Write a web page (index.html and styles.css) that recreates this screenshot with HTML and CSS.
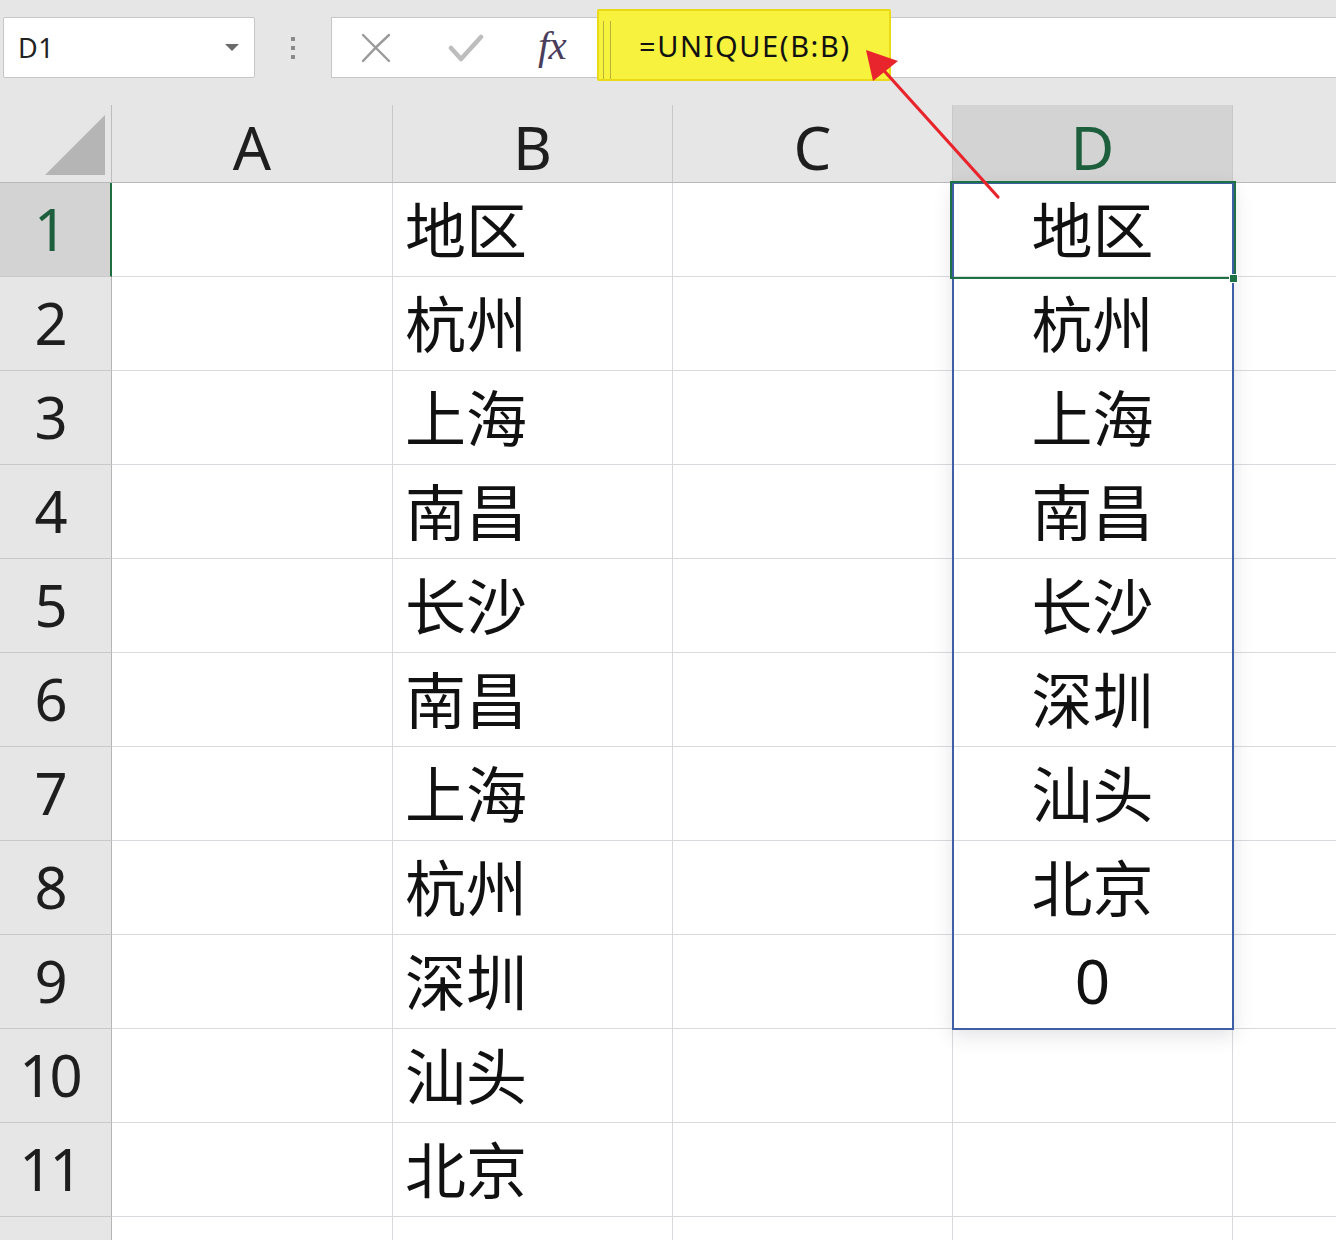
FILE: index.html
```html
<!DOCTYPE html>
<html lang="zh">
<head>
<meta charset="utf-8">
<title>UNIQUE</title>
<link rel="stylesheet" href="styles.css">
</head>
<body>
<div class="app">
  <div class="toolbar">
    <div class="namebox"><span class="ref">D1</span><span class="caret"></span></div>
    <div class="grip"><i></i><i></i><i></i></div>
    <div class="fbar">
      <span class="ic ic-x"><svg width="32" height="32" viewBox="0 0 32 32"><path d="M3 3 L29 29 M29 3 C20 11 12 19 3 29" fill="none" stroke="#9a9a9a" stroke-width="2.4" stroke-linecap="round"/></svg></span>
      <span class="ic ic-ok"><svg width="36" height="30" viewBox="0 0 36 30"><path d="M3 15 L13 26 L33 4" fill="none" stroke="#bdbdbd" stroke-width="4.5" stroke-linecap="round" stroke-linejoin="round"/></svg></span>
      <span class="fx">fx</span>
    </div>
  </div>

  <div class="sheet">
    <div class="corner"><span class="tri"></span></div>
    <div class="ch">A</div>
    <div class="ch">B</div>
    <div class="ch">C</div>
    <div class="ch sel">D</div>
    <div class="ch last"></div>

    <div class="rh sel">1</div><div class="c"></div><div class="c">地区</div><div class="c"></div><div class="c d">地区</div><div class="c last"></div>
    <div class="rh">2</div><div class="c"></div><div class="c">杭州</div><div class="c"></div><div class="c d">杭州</div><div class="c last"></div>
    <div class="rh">3</div><div class="c"></div><div class="c">上海</div><div class="c"></div><div class="c d">上海</div><div class="c last"></div>
    <div class="rh">4</div><div class="c"></div><div class="c">南昌</div><div class="c"></div><div class="c d">南昌</div><div class="c last"></div>
    <div class="rh">5</div><div class="c"></div><div class="c">长沙</div><div class="c"></div><div class="c d">长沙</div><div class="c last"></div>
    <div class="rh">6</div><div class="c"></div><div class="c">南昌</div><div class="c"></div><div class="c d">深圳</div><div class="c last"></div>
    <div class="rh">7</div><div class="c"></div><div class="c">上海</div><div class="c"></div><div class="c d">汕头</div><div class="c last"></div>
    <div class="rh">8</div><div class="c"></div><div class="c">杭州</div><div class="c"></div><div class="c d">北京</div><div class="c last"></div>
    <div class="rh">9</div><div class="c"></div><div class="c">深圳</div><div class="c"></div><div class="c d num">0</div><div class="c last"></div>
    <div class="rh">10</div><div class="c"></div><div class="c">汕头</div><div class="c"></div><div class="c d"></div><div class="c last"></div>
    <div class="rh">11</div><div class="c"></div><div class="c">北京</div><div class="c"></div><div class="c d"></div><div class="c last"></div>
    <div class="rh"></div><div class="c"></div><div class="c"></div><div class="c"></div><div class="c d"></div><div class="c last"></div>

    <div class="spill"></div>
    <div class="active"></div>
    <div class="handle"></div>
  </div>

  <div class="hl"><span class="bar"></span><span class="formula">=UNIQUE(B:B)</span></div>

  <svg class="arrow" width="1336" height="240" viewBox="0 0 1336 240">
    <line x1="998" y1="197" x2="878" y2="64" stroke="#e8242c" stroke-width="3.2" stroke-linecap="round"/>
    <polygon points="866,50 873,81 898,61" fill="#e8242c"/>
  </svg>
</div>
</body>
</html>
```

FILE: styles.css
```css
* { box-sizing: border-box; }
html, body { margin: 0; padding: 0; }
body {
  background: #e6e6e6;
  font-family: "Noto Sans", "Noto Sans CJK SC", sans-serif;
  color: #1a1a1a;
}
.app {
  position: relative;
  width: 1336px;
  height: 1240px;
  overflow: hidden;
  background: #e6e6e6;
}

/* ---------- toolbar ---------- */
.toolbar {
  height: 105px;
  padding-top: 17px;
  display: flex;
  align-items: flex-start;
}
.namebox {
  margin-left: 3px;
  width: 252px;
  height: 61px;
  background: #fff;
  border: 1px solid #c6c6c6;
  border-radius: 2px;
  display: flex;
  align-items: center;
  justify-content: space-between;
  padding: 0 15px 0 14px;
}
.ref {
  font-family: "Noto Sans", sans-serif;
  font-size: 27px;
  color: #222;
  letter-spacing: 0.5px;
}
.caret {
  width: 0;
  height: 0;
  border-left: 7px solid transparent;
  border-right: 7px solid transparent;
  border-top: 7px solid #6a6a6a;
}
.grip {
  width: 76px;
  height: 61px;
  display: flex;
  flex-direction: column;
  align-items: center;
  justify-content: center;
  gap: 5px;
}
.grip i {
  display: block;
  width: 4px;
  height: 4px;
  background: #8a8a8a;
}
.fbar {
  flex: 1;
  margin-right: -10px;
  height: 61px;
  background: #fff;
  border: 1px solid #c6c6c6;
  display: flex;
  align-items: center;
  padding-left: 28px;
}
.ic { display: flex; align-items: center; justify-content: center; }
.ic-x { width: 32px; height: 32px; }
.ic-ok { width: 36px; height: 30px; margin-left: 56px; }
.fx {
  margin-left: 54px;
  font-family: "Liberation Serif", "DejaVu Serif", serif;
  font-style: italic;
  font-size: 41px;
  color: #4a3d5c;
  letter-spacing: -1px;
  margin-top: -6px;
}

/* ---------- highlight of formula ---------- */
.hl {
  position: absolute;
  left: 597px;
  top: 9px;
  width: 294px;
  height: 72px;
  background: #f6f23e;
  border: 2px solid #e9d917;
  border-radius: 2px;
  display: flex;
  align-items: center;
}
.hl .bar {
  margin-left: 4px;
  width: 8px;
  height: 58px;
  border-left: 1px solid #b8b23a;
  border-right: 1px solid #b8b23a;
  align-self: flex-end;
}
.hl .formula {
  margin-left: 28px;
  font-family: "Noto Sans", sans-serif;
  font-size: 29px;
  color: #111;
  letter-spacing: 1.6px;
}
.arrow {
  position: absolute;
  left: 0;
  top: 0;
  pointer-events: none;
}

/* ---------- sheet ---------- */
.sheet {
  position: relative;
  height: 1135px;
  overflow: hidden;
  display: grid;
  grid-template-columns: 112px 281px 280px 280px 280px 103px;
  grid-template-rows: 78px;
  grid-auto-rows: 94px;
}
.corner {
  position: relative;
  border-right: 1px solid #bdbdbd;
  border-bottom: 1px solid #b9b9b9;
}
.tri {
  position: absolute;
  left: 45px;
  top: 10px;
  width: 60px;
  height: 60px;
  background: #b5b5b5;
  clip-path: polygon(0 100%, 100% 0, 100% 100%);
}
.ch {
  border-right: 1px solid #c8c8c8;
  border-bottom: 1px solid #b9b9b9;
  font-family: "Noto Sans", sans-serif;
  font-size: 60px;
  line-height: 77px;
  padding-top: 4px;
  text-align: center;
  color: #1e1e1e;
}
.ch.sel {
  background: #d3d3d3;
  color: #1d5f3d;
}
.ch.last { border-right: none; }
.rh {
  border-right: 1px solid #b5b5b5;
  border-bottom: 1px solid #c9c9c9;
  font-family: "Noto Sans", sans-serif;
  font-size: 58px;
  line-height: 92px;
  text-align: center;
  letter-spacing: -3px;
  padding-right: 12px;
  color: #1e1e1e;
}
.rh.sel {
  background: #d3d3d3;
  color: #1d5f3d;
  border-right: 2px solid #1e6e42;
}
.c {
  background: #fff;
  border-right: 1px solid #d9d9dd;
  border-bottom: 1px solid #d9d9dd;
  font-family: "Noto Sans CJK SC", "Noto Sans", sans-serif;
  font-size: 61px;
  line-height: 90px;
  padding-left: 12px;
  color: #111;
  white-space: nowrap;
}
.c.d {
  text-align: center;
  padding-left: 0;
}
.c.num {
  font-family: "Noto Sans", sans-serif;
  font-size: 62px;
}
.c.last { border-right: none; }

.spill {
  position: absolute;
  left: 952px;
  top: 77px;
  width: 282px;
  height: 848px;
  border: 2px solid #3e5fa6;
  box-shadow: 0 6px 18px rgba(60, 60, 80, 0.14);
  pointer-events: none;
}
.active {
  position: absolute;
  left: 950px;
  top: 76px;
  width: 286px;
  height: 98px;
  border: 2px solid #1e7145;
  pointer-events: none;
}
.handle {
  position: absolute;
  left: 1229px;
  top: 169px;
  width: 9px;
  height: 9px;
  background: #1e7145;
  border: 1px solid #fff;
}
```
